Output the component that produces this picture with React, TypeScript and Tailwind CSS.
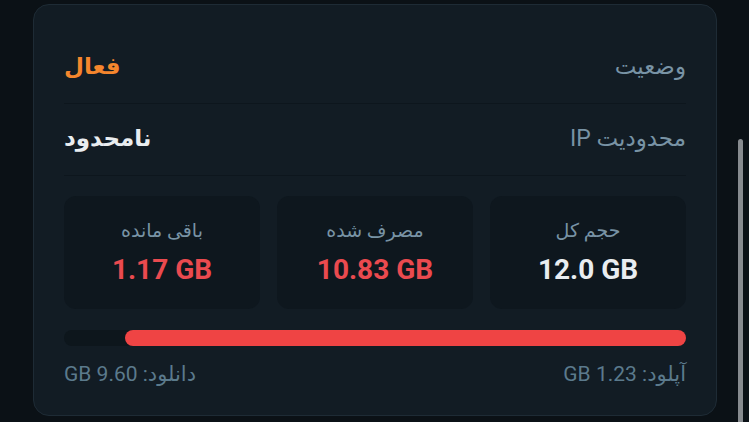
const stats = [
  { label: "حجم کل", value: "12.0 GB", tone: "text-[#e9edf0]" },
  { label: "مصرف شده", value: "10.83 GB", tone: "text-[#ea4a4f]" },
  { label: "باقی مانده", value: "1.17 GB", tone: "text-[#ea4a4f]" },
];

const used = 10.83;
const total = 12;

export default function App() {
  const pct = Math.min(100, (used / total) * 100);

  return (
    <div
      className="relative h-[422px] w-[749px] overflow-hidden bg-[#0b1116]"
      style={{ fontFamily: 'Roboto, "DejaVu Sans", sans-serif' }}>
      {/* کارت اشتراک */}
      <div
        dir="rtl"
        className="mt-[4px] ml-[33px] flex h-[412px] w-[684px] flex-col rounded-[16px] border border-[#1e2b35] bg-[#121c24] px-[30px] pt-[27px]">
        <div className="flex h-[72px] items-center justify-between border-b border-[#0d161d]">
          <span className="text-[23px] text-[#7893a5]">وضعیت</span>
          <span className="text-[23px] font-bold text-[#f5862d]">فعال</span>
        </div>
        <div className="flex h-[72px] items-center justify-between border-b border-[#0d161d]">
          <span className="text-[23px] text-[#7893a5]">محدودیت IP</span>
          <span className="text-[23px] font-bold text-[#e9edf0]">نامحدود</span>
        </div>

        <div className="mt-[20px] grid grid-cols-3 gap-[17px]">
          {stats.map((s) => (
            <div
              key={s.label}
              className="flex h-[113px] flex-col items-center rounded-[12px] bg-[#0e171e] pt-[21px]">
              <span className="text-[19px] leading-[28px] text-[#7893a5]">{s.label}</span>
              <span dir="ltr" className={`mt-[8px] text-[28px] leading-[34px] font-bold ${s.tone}`}>
                {s.value}
              </span>
            </div>
          ))}
        </div>

        <div className="mt-[21px] h-[16px] w-full rounded-full bg-[#0d161c]">
          <div className="h-full rounded-full bg-[#ef4444]" style={{ width: `${pct}%` }} />
        </div>

        <div className="mt-[14px] flex items-center justify-between text-[21px] leading-[28px] text-[#5b7a8c]">
          <span>آپلود: 1.23 GB</span>
          <span>دانلود: 9.60 GB</span>
        </div>
      </div>

      {/* اسکرول بار */}
      <div className="absolute top-[139px] right-[6px] h-[290px] w-[5px] rounded-full bg-[#878b8f]" />
    </div>
  );
}
